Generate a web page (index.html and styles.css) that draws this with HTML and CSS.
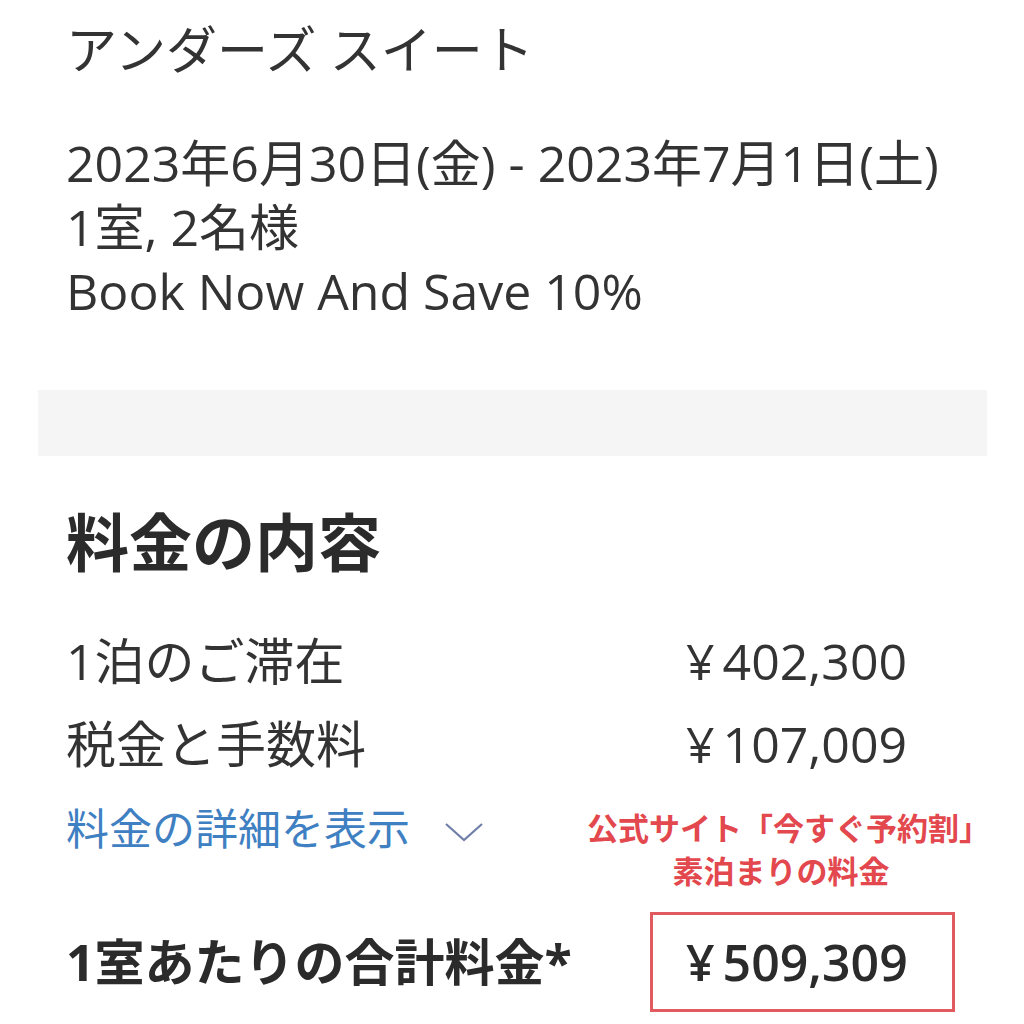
FILE: index.html
```html
<!DOCTYPE html>
<html lang="ja">
<head>
<meta charset="utf-8">
<link rel="stylesheet" href="styles.css">
</head>
<body>
<div class="page">
  <section class="summary">
    <h1 class="room">アンダーズ スイート</h1>
    <div class="details">
      <p>2023年6月30日(金) - 2023年7月1日(土)</p>
      <p>1室, 2名様</p>
      <p>Book Now And Save 10%</p>
    </div>
  </section>
  <div class="band"></div>
  <section class="charges">
    <h2 class="charges-title">料金の内容</h2>
    <div class="grid">
      <div class="label">1泊のご滞在</div>
      <div class="price"><span class="yen">¥</span>402,300</div>
      <div class="label">税金と手数料</div>
      <div class="price"><span class="yen">¥</span>107,009</div>
      <div class="link">料金の詳細を表示
        <svg class="chev" width="40" height="22" viewBox="0 0 40 22"><path d="M2 3 L20 19 L38 3" fill="none" stroke="#6f7fa8" stroke-width="2.2"/></svg>
      </div>
      <div class="note">公式サイト「今すぐ予約割」<br>素泊まりの料金</div>
      <div class="total-label">1室あたりの合計料金*</div>
      <div class="total-box"><span class="yen">¥</span>509,309</div>
    </div>
  </section>
</div>
</body>
</html>
```
FILE: styles.css
```css
html, body {
  margin: 0;
  padding: 0;
  background: #ffffff;
}
body {
  font-family: "Open Sans", "Noto Sans CJK JP", sans-serif;
  color: #333333;
}
.page {
  width: 1024px;
  height: 1024px;
  overflow: hidden;
}
.summary {
  padding: 17px 0 0 66px;
}
.room {
  margin: 0;
  font-weight: 400;
  font-size: 51px;
  line-height: 64px;
}
.details {
  margin-top: 50px;
}
.details p {
  margin: 0;
  font-size: 50px;
  line-height: 64px;
}
.band {
  margin: 67px 0 0 38px;
  width: 949px;
  height: 66px;
  background: #f5f5f5;
}
.charges {
  padding: 46px 0 0 66px;
}
.charges-title {
  margin: 0;
  font-size: 63px;
  font-weight: 700;
  line-height: 80px;
  color: #2b2b2b;
}
.grid {
  margin-top: 47px;
  display: grid;
  grid-template-columns: 584px 305px;
  row-gap: 19px;
  align-items: start;
}
.label {
  font-size: 50px;
  line-height: 64px;
}
.price {
  font-size: 50px;
  line-height: 64px;
  padding-left: 36px;
}
.yen {
  margin-right: 8px;
}
.link {
  font-size: 43px;
  line-height: 56px;
  color: #3f80c2;
  display: flex;
  align-items: center;
  gap: 34px;
  margin-top: 6px;
}
.chev {
  margin-top: 6px;
}
.note {
  margin: 12px 0 0 -63px;
  width: 388px;
  text-align: center;
  white-space: nowrap;
  font-size: 31px;
  font-weight: 700;
  line-height: 43px;
  color: #e2484d;
}
.total-label {
  align-self: center;
  font-size: 50px;
  font-weight: 700;
  color: #2b2b2b;
  line-height: 64px;
}
.total-box {
  box-sizing: border-box;
  height: 100px;
  border: 3px solid #e05a5f;
  padding-left: 33px;
  font-size: 50px;
  font-weight: 600;
  color: #2b2b2b;
  display: flex;
  align-items: center;
}
```
